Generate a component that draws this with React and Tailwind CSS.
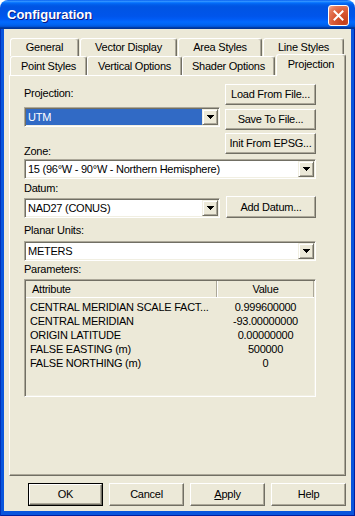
import React from 'react';

const params = [
  ['CENTRAL MERIDIAN SCALE FACT...', '0.999600000'],
  ['CENTRAL MERIDIAN', '-93.00000000'],
  ['ORIGIN LATITUDE', '0.00000000'],
  ['FALSE EASTING (m)', '500000'],
  ['FALSE NORTHING (m)', '0'],
];

function Btn({ children, className = '', def }) {
  return (
    <div className={`flex bg-[#ECE9D8] ${def ? 'border border-black' : ''} ${className}`}>
      <div className="flex-1 flex items-center justify-center border border-t-white border-l-white border-r-[#716F64] border-b-[#716F64] shadow-[inset_-1px_-1px_0_#ACA899]">
        {children}
      </div>
    </div>
  );
}

function Arrow() {
  return (
    <svg width="7" height="4" viewBox="0 0 7 4" shapeRendering="crispEdges">
      <rect x="0" y="0" width="7" height="1" fill="#000" />
      <rect x="1" y="1" width="5" height="1" fill="#000" />
      <rect x="2" y="2" width="3" height="1" fill="#000" />
      <rect x="3" y="3" width="1" height="1" fill="#000" />
    </svg>
  );
}

function Combo({ value, selected, className = '' }) {
  return (
    <div className={`flex h-[20px] bg-white border border-t-[#ACA899] border-l-[#ACA899] border-r-white border-b-white shadow-[inset_1px_1px_0_#716F64,inset_-1px_-1px_0_#F1EFE2] p-[1px] ${className}`}>
      <div className={`flex-1 flex items-center pl-[2px] ${selected ? 'bg-[#316AC5] text-white' : ''}`}>{value}</div>
      <div className="w-[16px] flex items-center justify-center bg-[#ECE9D8] border border-t-[#F1EFE2] border-l-[#F1EFE2] border-r-[#716F64] border-b-[#716F64] shadow-[inset_1px_1px_0_#fff,inset_-1px_-1px_0_#ACA899]">
        <Arrow />
      </div>
    </div>
  );
}

function Tab({ label, className = '', active }) {
  return (
    <div
      className={`flex items-center justify-center bg-[#ECE9D8] rounded-t-[3px] border-t border-l border-r border-t-white border-l-white border-r-[#716F64] shadow-[inset_-1px_0_0_#ACA899] ${
        active ? 'relative z-10 h-[22px] -mb-[1px] pb-[3px]' : 'h-full'
      } ${className}`}
    >
      {label}
    </div>
  );
}

function Label({ children, className = '' }) {
  return <div className={`h-[13px] leading-[13px] ${className}`}>{children}</div>;
}

export default function App() {
  return (
    <div className="w-[355px] h-[516px] flex flex-col bg-white text-[11px] text-black font-['Liberation_Sans',Arial,sans-serif] tracking-[-0.25px]">
      <div className="h-[29px] shrink-0 flex justify-between rounded-t-[8px] bg-[linear-gradient(to_bottom,#0058EE_0%,#3593FF_4%,#288EFF_6%,#127DFF_8%,#036FFC_10%,#0262EE_14%,#0057E5_20%,#0054E3_24%,#0055EB_56%,#005BF5_66%,#026AFE_76%,#0062EF_86%,#0052D6_92%,#0040AB_94%,#003092_100%)]">
        <div className="pl-[7px] flex items-center text-white font-bold text-[13px] tracking-normal [text-shadow:1px_1px_0_#0A1883]">
          Configuration
        </div>
        <div className="mt-[5px] mr-[6px] w-[21px] h-[21px] rounded-[3px] border border-white flex items-center justify-center bg-[radial-gradient(circle_at_80%_85%,#C33E1A_0%,#DA5A36_50%,#E67B5C_80%,#F3B49E_100%)]">
          <svg width="11" height="11" viewBox="0 0 11 11">
            <path d="M1.5 1.5 L9.5 9.5 M9.5 1.5 L1.5 9.5" stroke="#fff" strokeWidth="2" strokeLinecap="square" />
          </svg>
        </div>
      </div>

      <div className="flex-1 flex bg-[#0855DD] px-[4px] pb-[5px] shadow-[inset_1px_0_0_#0031B8,inset_-1px_0_0_#001EA0,inset_0_-1px_0_#001EA0]">
        <div className="flex-1 flex flex-col bg-[#ECE9D8] pt-[9px]">
          <div className="h-[18px] flex gap-[1px] ml-[6px]">
            <Tab label="General" className="w-[69px]" />
            <Tab label="Vector Display" className="w-[97px]" />
            <Tab label="Area Styles" className="w-[84px]" />
            <Tab label="Line Styles" className="w-[81px]" />
          </div>
          <div className="h-[19px] flex items-end ml-[6px]">
            <Tab label="Point Styles" className="w-[77px]" />
            <Tab label="Vertical Options" className="w-[95px]" />
            <Tab label="Shader Options" className="w-[93px]" />
            <Tab label="Projection" className="w-[70px] ml-[1px]" active />
          </div>

          <div className="ml-[5px] w-[337px] h-[401px] border border-t-white border-l-white border-r-[#716F64] border-b-[#716F64] shadow-[inset_-1px_-1px_0_#ACA899] pt-[8px] pl-[14px]">
            <div className="w-[292px] flex flex-col">
              <div className="flex gap-[5px] items-start">
                <div className="w-[196px] flex flex-col">
                  <Label className="mt-[3px]">Projection:</Label>
                  <Combo value="UTM" selected className="mt-[7px]" />
                  <Label className="mt-[18px]">Zone:</Label>
                </div>
                <div className="w-[91px] flex flex-col">
                  <Btn className="h-[21px]">Load From File...</Btn>
                  <Btn className="h-[21px] mt-[4px]">Save To File...</Btn>
                  <Btn className="h-[21px] mt-[3px]">Init From EPSG...</Btn>
                </div>
              </div>
              <Combo value="15 (96°W - 90°W - Northern Hemisphere)" className="mt-[1px]" />
              <Label className="mt-[3px]">Datum:</Label>
              <div className="mt-[1px] flex gap-[6px] items-start">
                <Combo value="NAD27 (CONUS)" className="w-[196px] mt-[2px]" />
                <Btn className="w-[90px] h-[22px]">Add Datum...</Btn>
              </div>
              <Label className="mt-[6px]">Planar Units:</Label>
              <Combo value="METERS" className="mt-[4px]" />
              <Label className="mt-[2px]">Parameters:</Label>
              <div className="mt-[3px] h-[118px] flex flex-col border border-t-[#ACA899] border-l-[#ACA899] border-r-white border-b-white shadow-[inset_1px_1px_0_#716F64,inset_-1px_-1px_0_#F1EFE2] p-[1px]">
                <div className="h-[17px] flex border-b border-white">
                  <div className="w-[191px] flex items-center pl-[6px] border-r border-[#ACA899]">Attribute</div>
                  <div className="w-[97px] flex items-center justify-center border-l border-l-white border-r border-r-[#ACA899]">Value</div>
                </div>
                <div className="pt-[2px] flex flex-col">
                  {params.map(([a, v]) => (
                    <div key={a} className="h-[14px] flex items-center">
                      <div className="w-[191px] pl-[4px] whitespace-nowrap">{a}</div>
                      <div className="w-[97px] text-center">{v}</div>
                    </div>
                  ))}
                </div>
              </div>
            </div>
          </div>

          <div className="mt-[7px] flex justify-end gap-[6px] pr-[5px]">
            <Btn def className="w-[75px] h-[23px]">OK</Btn>
            <Btn className="w-[75px] h-[23px]">Cancel</Btn>
            <Btn className="w-[75px] h-[23px]"><span><span className="underline">A</span>pply</span></Btn>
            <Btn className="w-[75px] h-[23px]">Help</Btn>
          </div>
        </div>
      </div>
    </div>
  );
}
